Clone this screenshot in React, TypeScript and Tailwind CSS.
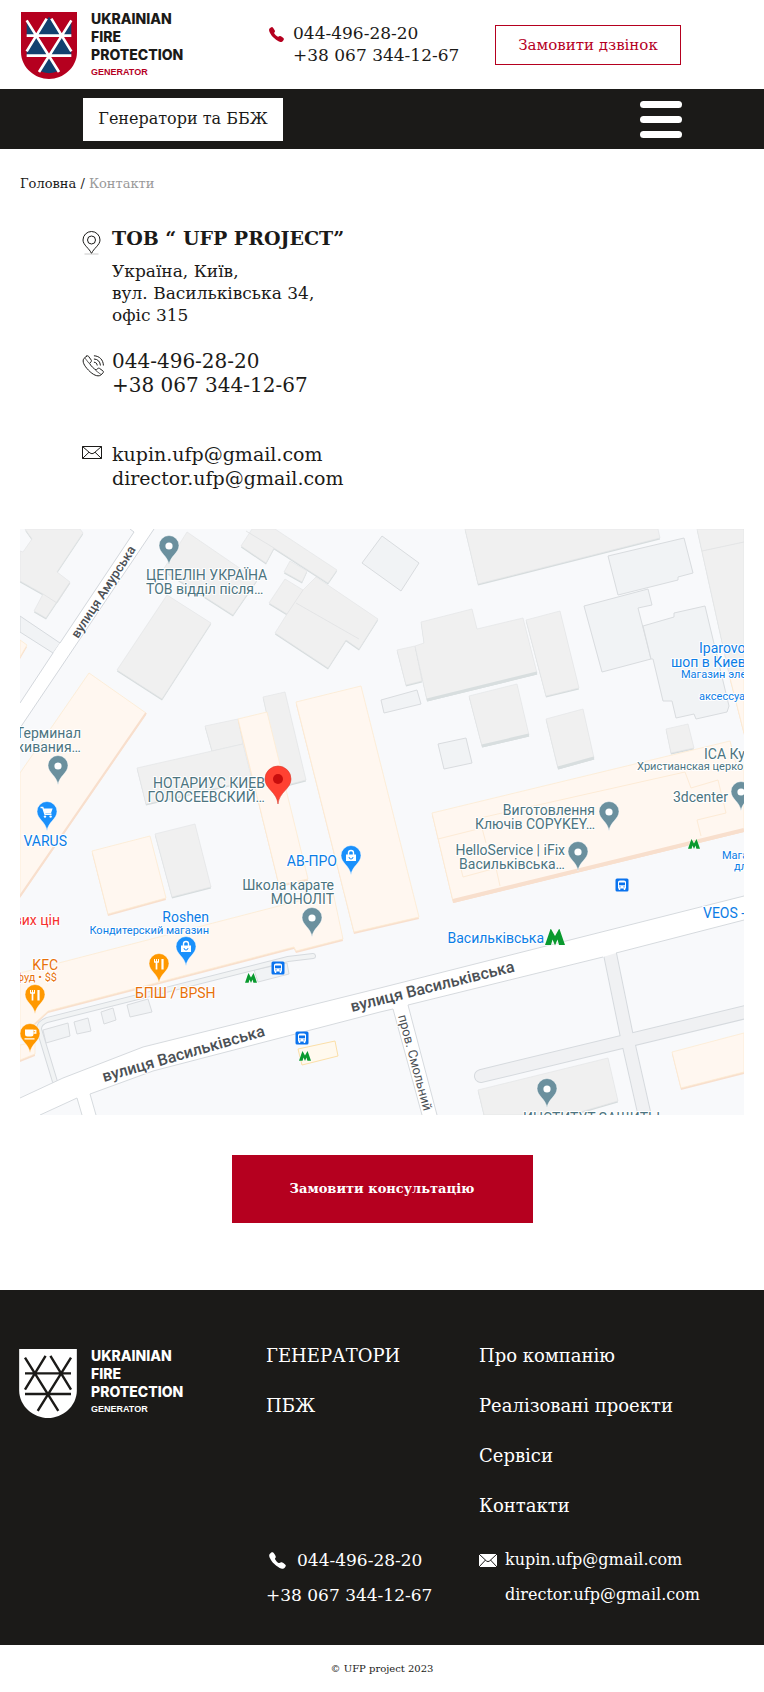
import type { ReactNode } from "react";
import { IoCall } from "react-icons/io5";

const serif = "font-['DejaVu_Serif','Liberation_Serif',serif]";

function Shield({ inverted = false }: { inverted?: boolean }) {
  const base = inverted ? "#ffffff" : "#b5001f";
  const line = inverted ? "#1b1a18" : "#ffffff";
  return (
    <svg
      viewBox="0 0 168 201"
      className={`mt-[2px] shrink-0 ${inverted ? "h-[69px] w-[58px]" : "h-[67px] w-14"}`}
      aria-hidden="true"
    >
      <path d="M0 0H168V120C168 167 126 201 84 201S0 167 0 120Z" fill={base} />
      {!inverted && (
        <g fill="#12416f">
          <path d="M17 30V70H44Z" />
          <path d="M151 30V70H124Z" />
          <path d="M84 14L46 70H122Z" />
          <path d="M44 70L17 114V130H84Z" />
          <path d="M124 70L151 114V130H84Z" />
          <path d="M84 130L56 177Q84 190 112 177Z" />
        </g>
      )}
      <path
        d="M17 71H151M17 131H151M77 20L17 118M91 20L151 118M17 25L114 180M151 25L54 180"
        stroke={line}
        strokeWidth={inverted ? 7 : 8}
        fill="none"
      />
    </svg>
  );
}

function Logo({ inverted = false }: { inverted?: boolean }) {
  return (
    <a href="#" className="flex items-start gap-[14px]">
      <Shield inverted={inverted} />
      <span
        className={`flex flex-col font-['Inter',sans-serif] text-sm leading-[18px] font-extrabold ${
          inverted ? "text-white" : "text-[#1b1a18]"
        }`}
      >
        <span>UKRAINIAN</span>
        <span>FIRE</span>
        <span>PROTECTION</span>
        <span
          className={`font-['Liberation_Sans',sans-serif] text-[9px] leading-4 font-bold ${
            inverted ? "text-white" : "text-[#b5001f]"
          }`}
        >
          GENERATOR
        </span>
      </span>
    </a>
  );
}

function PinOutline() {
  return (
    <svg viewBox="0 0 20 24" className="h-6 w-5" fill="none" stroke="#1b1a18" aria-hidden="true">
      <path d="M9.500 22.500C7.500 17.500 1 14 1 9a8.500 8.500 0 0 1 17 0c0 5-6.500 8.500-8.500 13.500Z" />
      <circle cx="9.500" cy="9" r="4" />
      <path d="M2.500 23H16.500" stroke="#c8c8c8" />
    </svg>
  );
}

function PhoneOutline() {
  return (
    <svg
      viewBox="0 0 22 22"
      className="h-[22px] w-[22px]"
      fill="none"
      stroke="#1b1a18"
      strokeLinecap="round"
      strokeLinejoin="round"
      aria-hidden="true"
    >
      <path d="M4.500 1.200 1.800 3.600C0 6.500 2 10.500 6.500 15.200s9 6.800 12.200 5l2.300-2.400c.6-.7.500-1.300-.1-1.900l-3.200-2.400c-.7-.5-1.400-.4-2 .1l-1.500 1.400c-1.500-.3-6.300-5-6.600-6.700L9 6.800c.5-.6.600-1.200.1-1.900L6.600 1.400c-.6-.8-1.400-.8-2.100-.2Z" />
      <path d="M3.200 3.400 6.800 8M13.800 15.600l4.800 3.600" strokeWidth="0.700" />
      <path d="M12.300 7.200c1.700.2 2.700 1.200 2.900 2.900M12.300 4c3.500.2 5.900 2.600 6.100 6.100M12.300 .8c5.200.2 8.900 4 9.100 9.300" />
    </svg>
  );
}

function MailOutline() {
  return (
    <svg viewBox="0 0 20 14" className="mt-1 h-[14px] w-5" fill="none" stroke="#1b1a18" aria-hidden="true">
      <path d="M.5 .5H19.500V12.500H.5Z" />
      <path d="M.5 .5 8 7Q10 8.500 12 7L19.500 .5M.5 12.500 7 6.200M19.500 12.500 13 6.200" />
    </svg>
  );
}

function MailSolid() {
  return (
    <svg viewBox="0 0 18 13" className="mt-[6px] h-[13px] w-[18px]" aria-hidden="true">
      <rect width="18" height="13" rx="1" fill="#fff" />
      <path d="M0 0 7.500 7Q9 8.200 10.500 7L18 0M0 13 6.500 6M18 13 11.500 6" fill="none" stroke="#1b1a18" />
    </svg>
  );
}

type Kind = "place" | "bag" | "cart" | "food" | "cafe";

const pinFill: Record<Kind, string> = {
  place: "#6b909e",
  bag: "#1a90fb",
  cart: "#1a90fb",
  food: "#ff9800",
  cafe: "#ff9800",
};

const glyphs: Record<Kind, ReactNode> = {
  place: <circle r="3.600" fill="#fff" />,
  bag: (
    <g>
      <path d="M-5-1.500H5V5H-5Z" fill="#fff" />
      <path d="M-2.500-1V-3a2.500 2.500 0 0 1 5 0v2" fill="none" stroke="#fff" strokeWidth="1.400" />
      <path d="M-2 1a2 2 0 0 0 4 0" fill="none" stroke="#1a90fb" />
    </g>
  ),
  cart: (
    <g>
      <path d="M-6.500-4.500h2.300L-2 2.300H4.500" fill="none" stroke="#fff" strokeWidth="1.400" />
      <path d="M-3.700-3.500H5.600L4 1.200H-2.300Z" fill="#fff" />
      <circle cx="-2" cy="4.600" r="1.200" fill="#fff" />
      <circle cx="3.600" cy="4.600" r="1.200" fill="#fff" />
    </g>
  ),
  food: (
    <g stroke="#fff" fill="none">
      <path d="M-4.500-5V-1.500M-2.500-5V-1.500M-.5-5V-1.500" strokeWidth="1" />
      <path d="M-4.500-2H-.5M-2.500-2V5.500" strokeWidth="1.700" />
      <path d="M3.500-5V5.500" strokeWidth="2.200" />
    </g>
  ),
  cafe: (
    <g>
      <path d="M-5-4.500H3.500V0a2.500 2.500 0 0 1-2.500 2.500H-2.500A2.500 2.500 0 0 1-5 0Z" fill="#fff" />
      <path d="M3.500-3.500H5.800V-1H3.500M-5.500 4.800H4.500" fill="none" stroke="#fff" strokeWidth="1.300" />
    </g>
  ),
};

const pins: [Kind, number, number][] = [
  ["place", 149, 36],
  ["place", 38, 256],
  ["cart", 27, 302],
  ["bag", 331, 346],
  ["place", 292, 408],
  ["bag", 166, 437],
  ["food", 139, 454],
  ["food", 15, 485],
  ["cafe", 10, 524],
  ["place", 589, 302],
  ["place", 558, 342],
  ["place", 721, 282],
  ["place", 527, 579],
];

const slate = "#4c7480";
const blue = "#0b7de6";
const orange = "#e8710a";

type MapLabel = { t: string; x: number; y: number; c: string; end?: boolean; small?: boolean };

const labels: MapLabel[] = [
  { t: "ЦЕПЕЛІН УКРАЇНА", x: 126, y: 51, c: slate },
  { t: "ТОВ відділ після…", x: 126, y: 65, c: slate },
  { t: "Терминал", x: 61, y: 209, c: slate, end: true },
  { t: "живания…", x: 61, y: 223, c: slate, end: true },
  { t: "НОТАРИУС КИЕВ", x: 245, y: 259, c: slate, end: true },
  { t: "ГОЛОСЕЕВСКИЙ…", x: 245, y: 273, c: slate, end: true },
  { t: "VARUS", x: 47, y: 317, c: blue, end: true },
  { t: "АВ-ПРО", x: 317, y: 337, c: blue, end: true },
  { t: "Школа карате", x: 314, y: 361, c: slate, end: true },
  { t: "МОНОЛІТ", x: 314, y: 375, c: slate, end: true },
  { t: "вих цін", x: 40, y: 396, c: "#f5302e", end: true },
  { t: "Roshen", x: 189, y: 393, c: blue, end: true },
  { t: "Кондитерский магазин", x: 189, y: 405, c: blue, end: true, small: true },
  { t: "KFC", x: 38, y: 441, c: orange, end: true },
  { t: "фуд • $$", x: 37, y: 452, c: orange, end: true, small: true },
  { t: "БПШ / BPSH", x: 115, y: 469, c: orange },
  { t: "Iparovo", x: 679, y: 124, c: blue },
  { t: "шоп в Киев", x: 651, y: 138, c: blue },
  { t: "Магазин эле", x: 661, y: 149, c: blue, small: true },
  { t: "аксессуа", x: 679, y: 171, c: blue, small: true },
  { t: "ICA Ку", x: 684, y: 230, c: slate },
  { t: "Христианская церко", x: 617, y: 241, c: slate, small: true },
  { t: "3dcenter", x: 708, y: 273, c: slate, end: true },
  { t: "Виготовлення", x: 575, y: 286, c: slate, end: true },
  { t: "Ключів COPYKEY…", x: 575, y: 300, c: slate, end: true },
  { t: "HelloService | iFix", x: 545, y: 326, c: slate, end: true },
  { t: "Васильківська…", x: 545, y: 340, c: slate, end: true },
  { t: "Мага", x: 702, y: 330, c: blue, small: true },
  { t: "дл", x: 714, y: 341, c: blue, small: true },
  { t: "VEOS -", x: 683, y: 389, c: blue },
  { t: "Васильківська", x: 524, y: 414, c: blue, end: true },
  { t: "ИНСТИТУТ ЗАЩИТЫ", x: 503, y: 594, c: slate },
];

const greyBuildings = [
  "5,0 60,0 63,4 37,43 50,53 26,89 14,82 23,65 0,52 0,22 3,23 12,10",
  "167,3 237,51 213,86 143,41",
  "147,66 191,94 142,170 97,141",
  "232,0 255,0 317,41 308,54 254,19 246,34 221,17",
  "270,32 287,42 282,53 264,43",
  "296,48 358,90 339,120 326,111 308,139 255,104 267,85 249,74 265,50 283,61",
  "185,197 218,190 223,215 192,222",
  "117,239 223,215 232,251 126,275",
  "243,168 265,163 286,251 263,257",
  "445,0 638,0 640,9 458,55",
  "377,121 395,117 402,152 386,156",
  "401,93 452,80 457,100 503,89 517,144 407,171 395,117 404,114",
  "506,91 540,82 559,159 526,167",
  "449,167 497,155 509,206 462,217",
  "526,190 563,180 574,229 538,239",
  "646,200 668,195 674,219 651,224",
  "135,305 175,295 191,358 152,368",
  "458,561 588,529 598,572 550,586 464,586",
  "677,0 724,0 724,145 710,149",
];

const outlinedBuildings = [
  "362,7 399,34 381,62 342,34",
  "361,171 397,161 401,175 364,184",
  "588,27 664,9 673,44 658,48 658,51 598,66",
  "564,77 628,60 632,76 618,79 631,130 582,143",
  "623,97 654,88 654,84 685,77 709,177 707,183 676,190 674,185 656,189 652,172 643,172 633,130 631,130",
  "418,215 446,209 452,234 424,240",
  "23,501 48,494 50,507 26,514",
  "54,493 68,489 71,502 57,505",
  "81,483 93,479 96,491 84,495",
  "107,476 128,470 132,483 110,488",
  "234,441 267,434 269,445 238,453",
];

const shops = [
  "0,111 7,116 0,128",
  "69,144 126,184 0,367 0,244",
  "218,190 247,183 288,350 259,356",
  "276,173 341,157 399,388 334,403",
  "710,149 724,145 724,204",
  "412,284 710,212 717,238 724,236 724,301 433,372",
  "72,322 130,307 146,369 88,385",
  "0,444 313,363 323,410 276,422 274,418 28,482 15,494 0,507",
  "0,516 15,513 15,525 0,531",
  "652,523 724,504 724,543 661,559",
];

function Metro({ x, y, w }: { x: number; y: number; w: number }) {
  return (
    <path
      transform={`translate(${x} ${y}) scale(${w / 20})`}
      d="M-10 8-4.500-8-4-8 0-1 4-8 4.500-8 10 8H4L2.500 2.500 0 8.500-2.500 2.500-4 8Z"
      fill="#0a9a2f"
      stroke="#fff"
      strokeWidth="1"
      paintOrder="stroke"
    />
  );
}

function Bus({ x, y }: { x: number; y: number }) {
  return (
    <g transform={`translate(${x} ${y})`}>
      <rect x="-6.500" y="-6.500" width="13" height="13" rx="1.500" fill="#0a73ee" />
      <path d="M-4-3Q-4-4.500-2-4.500H2Q4-4.500 4-3V3.500H-4Z" fill="#fff" />
      <path d="M-3-2.500H3V.3H-3Z" fill="#0a73ee" />
      <path d="M-2.500 3v2M2.500 3v2" stroke="#fff" strokeWidth="1.500" />
      <path d="M-2.600 1.900h1.200M1.400 1.900h1.200" stroke="#0a73ee" />
    </g>
  );
}

function CityMap() {
  return (
    <svg
      viewBox="0 0 724 586"
      role="img"
      aria-label="Васильківська 34"
      className="block h-auto w-full overflow-hidden bg-[#f8f9fb] font-['Roboto',sans-serif]"
    >
      <path d="M0 87 40 114 33 124 0 103Z" fill="#f1f3f5" stroke="#d6dade" />
      <path d="M110 0 114 3 0 174V199L134 0Z" fill="#fff" />
      <path d="M110 0 114 3 40 114M33 124 0 174M134 0 0 199" fill="none" stroke="#d3d7dc" />

      {greyBuildings.map((p) => (
        <g key={p}>
          <polygon points={p} transform="translate(0 1.500)" fill="#d6dcdd" />
          <polygon points={p} fill="#f0f0f0" stroke="#e4e5e6" strokeWidth="0.700" />
        </g>
      ))}
      <path d="M538 239 574 229M407 171 517 144M462 217 509 206" stroke="#d8dedf" strokeWidth="3" />
      <path
        d="M23 65 37 74 50 54M283 61 267 85M276 74 339 110M682 22 724 13M226 2 254 19"
        fill="none"
        stroke="#dfe1e2"
        strokeWidth="0.800"
      />
      {outlinedBuildings.map((p) => (
        <polygon key={p} points={p} fill="#f1f3f5" stroke="#d9dcdf" />
      ))}
      {shops.map((p) => (
        <g key={p}>
          <polygon points={p} transform="translate(0 2)" fill="#f8dfcd" />
          <polygon points={p} fill="#fff7f0" stroke="#fdebd2" strokeWidth="0.800" />
        </g>
      ))}
      <path d="M433 372 724 301" stroke="#f8dfcd" strokeWidth="4" />
      <path d="M126 184 0 367" stroke="#f8dfcd" strokeWidth="2" />
      <path
        d="M460 289 665 243 671 259 698 251 706 284 677 291 681 307M418 310 462 299 466 314M443 348 476 339 480 357M443 348 440 336"
        fill="none"
        stroke="#fdebd6"
      />

      <path d="M36 556 19 500Q19 494 27 491L268 430 293 427" fill="none" stroke="#d6dade" strokeWidth="6" strokeLinecap="round" />
      <path d="M36 556 19 500Q19 494 27 491L268 430 293 427" fill="none" stroke="#f1f3f4" strokeWidth="4" strokeLinecap="round" />

      <g fill="none" stroke="#d6dade">
        <path d="M461 547 730 482" strokeWidth="14" strokeLinecap="round" />
        <path d="M589 420 607 508 626 592" strokeWidth="14" />
      </g>
      <g fill="none" stroke="#f0f1f3">
        <path d="M461 547 730 482" strokeWidth="12" strokeLinecap="round" />
        <path d="M589 420 607 508 626 592" strokeWidth="12" />
      </g>

      <path
        d="M0 569 43 549 123 518 360 459 724 367V391L596 424 583 428 388 476 417 586H402L373 480 360 483 133 542 70 565 76 586H62L57 569 20 586H0Z"
        fill="#fff"
      />
      <path
        d="M0 569 43 549 123 518 360 459 724 367M724 391 596 424M583 428 388 476 417 586M402 586 373 480 360 483 133 542 70 565 76 586M62 586 57 569 20 586"
        fill="none"
        stroke="#d6dade"
      />
      <polygon points="278,520 315,512 318,527 282,536" fill="#fff9ee" stroke="#fbdfa8" />

      <g fill="#4b5055" fontWeight="500" stroke="#fff" strokeWidth="2" paintOrder="stroke" strokeLinejoin="round">
        <text transform="translate(58 110) rotate(-57)" fontSize="13">вулиця Амурська</text>
        <text transform="translate(84 553) rotate(-16)" fontSize="16">вулиця Васильківська</text>
        <text transform="translate(332 483) rotate(-14)" fontSize="16">вулиця Васильківська</text>
        <text transform="translate(378 487) rotate(75)" fontSize="13" fontWeight="400">пров. Смольний</text>
      </g>

      {labels.map((l) => (
        <text
          key={l.t + l.y}
          x={l.x}
          y={l.y}
          fill={l.c}
          fontSize={l.small ? 11 : 14}
          textAnchor={l.end ? "end" : "start"}
          stroke="#fff"
          strokeWidth="2"
          strokeLinejoin="round"
          paintOrder="stroke"
        >
          {l.t}
        </text>
      ))}

      <Bus x={258} y={439} />
      <Bus x={282} y={509} />
      <Bus x={602} y={356} />
      <Metro x={535} y={408} w={20} />
      <Metro x={231} y={449} w={12} />
      <Metro x={285} y={527} w={12} />
      <Metro x={674} y={315} w={12} />

      {pins.map(([kind, x, y]) => (
        <g key={`${x}-${y}`} transform={`translate(${x} ${y - 19})`}>
          <path d="M0 19C-1 10-10 7-10-.5a10 10 0 0 1 20 0C10 7 1 10 0 19Z" fill={pinFill[kind]} stroke="#fff" strokeWidth="0.500" />
          {glyphs[kind]}
        </g>
      ))}
      <g transform="translate(258 250)">
        <path d="M0 25C-1 13-13 10-13 0a13 13 0 0 1 26 0C13 10 1 13 0 25Z" fill="#ff4132" stroke="#d93a2b" strokeWidth="0.600" />
        <circle r="5" fill="#c80d0d" />
      </g>
    </svg>
  );
}

export default function App() {
  return (
    <div className={`min-h-screen bg-white text-[#1b1a18] ${serif}`}>
      <header>
        <div className="flex h-[89px] items-start pl-[21px]">
          <div className="w-[247px] pt-[10px]">
            <Logo />
          </div>
          <div className="flex w-[227px] gap-2 pt-[22px]">
            <IoCall className="mt-1 h-[17px] w-[17px] text-[#b5001f]" aria-hidden="true" />
            <div className="flex flex-col text-[17px] leading-[22px] whitespace-nowrap">
              <a href="tel:0444962820">044-496-28-20</a>
              <a href="tel:+380673441267">+38 067 344-12-67</a>
            </div>
          </div>
          <button type="button" className="mt-[25px] h-10 w-[186px] border border-[#b5001f] text-[15px] whitespace-nowrap text-[#b5001f]">
            Замовити дзвінок
          </button>
        </div>
        <nav className="flex h-[60px] items-center justify-between bg-[#1b1a18] pr-[82px] pl-[83px]">
          <button type="button" className="h-[43px] w-[200px] bg-white text-base whitespace-nowrap">
            Генератори та ББЖ
          </button>
          <button type="button" aria-label="Меню" className="flex w-[42px] flex-col gap-2">
            <span className="h-[7px] rounded-full bg-white" />
            <span className="h-[7px] rounded-full bg-white" />
            <span className="h-[7px] rounded-full bg-white" />
          </button>
        </nav>
      </header>

      <main>
        <nav aria-label="Навігація" className="px-5 pt-[26px] text-[13px] leading-[18px]">
          <a href="#">Головна</a> / <span className="text-[#999]">Контакти</span>
        </nav>

        <address className="pt-[33px] pl-[82px] not-italic">
          <div className="flex gap-[10px]">
            <div className="w-5 pt-[5px]">
              <PinOutline />
            </div>
            <div>
              <h1 className="text-[19px] leading-6 font-bold">ТОВ “ UFP PROJECT”</h1>
              <p className="mt-[10px] text-[17px] leading-[22px]">
                Україна, Київ,
                <br />
                вул. Васильківська 34,
                <br />
                офіс 315
              </p>
            </div>
          </div>
          <div className="mt-[23px] flex gap-2">
            <div className="w-[22px] pt-[6px]">
              <PhoneOutline />
            </div>
            <div className="flex flex-col text-xl leading-6">
              <a href="tel:0444962820">044-496-28-20</a>
              <a href="tel:+380673441267">+38 067 344-12-67</a>
            </div>
          </div>
          <div className="mt-[45px] flex gap-[10px]">
            <MailOutline />
            <div className="flex flex-col text-[19px] leading-6">
              <a href="mailto:kupin.ufp@gmail.com">kupin.ufp@gmail.com</a>
              <a href="mailto:director.ufp@gmail.com">director.ufp@gmail.com</a>
            </div>
          </div>
        </address>

        <div className="mt-[39px] px-5">
          <CityMap />
        </div>

        <div className="flex justify-center pt-10 pb-[67px]">
          <button type="button" className="h-[68px] w-[301px] bg-[#b5001f] text-[13px] font-bold text-white">
            Замовити консультацію
          </button>
        </div>
      </main>

      <footer>
        <div className="bg-[#1b1a18] pt-[54px] pb-[38px] pl-[19px] text-white">
          <div className="flex items-start">
            <div className="w-[247px] pt-[3px]">
              <Logo inverted />
            </div>
            <nav aria-label="Каталог" className="flex w-[213px] flex-col gap-[26px] text-lg leading-6">
              <a href="#">ГЕНЕРАТОРИ</a>
              <a href="#">ПБЖ</a>
            </nav>
            <nav aria-label="Компанія" className="flex flex-col gap-[26px] text-lg leading-6">
              <a href="#">Про компанію</a>
              <a href="#">Реалізовані проекти</a>
              <a href="#">Сервіси</a>
              <a href="#">Контакти</a>
            </nav>
          </div>
          <div className="mt-[30px] flex pl-[247px]">
            <div className="flex w-[213px] flex-col gap-[11px] text-[17px] leading-6">
              <a href="tel:0444962820" className="flex items-center gap-[10px]">
                <IoCall className="ml-[2px] h-[19px] w-[19px]" aria-hidden="true" />
                044-496-28-20
              </a>
              <a href="tel:+380673441267">+38 067 344-12-67</a>
            </div>
            <div className="flex gap-2">
              <MailSolid />
              <div className="flex flex-col gap-[11px] text-base leading-6">
                <a href="mailto:kupin.ufp@gmail.com">kupin.ufp@gmail.com</a>
                <a href="mailto:director.ufp@gmail.com">director.ufp@gmail.com</a>
              </div>
            </div>
          </div>
        </div>
        <p className="pt-4 pb-[15px] text-center text-[10px] leading-4">© UFP project 2023</p>
      </footer>
    </div>
  );
}
